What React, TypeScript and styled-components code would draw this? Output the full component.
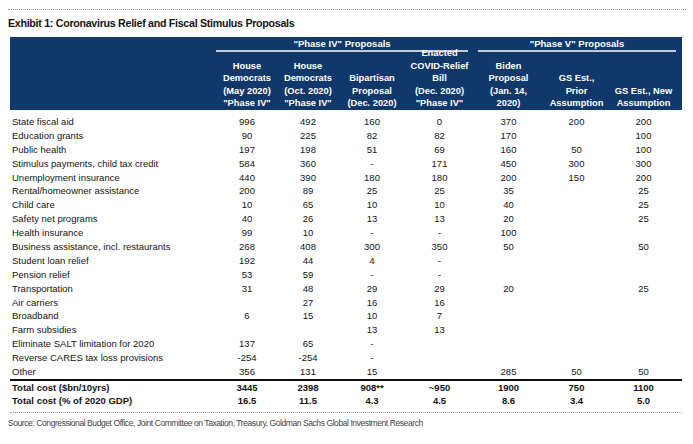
import React from "react";
import styled, { createGlobalStyle } from "styled-components";

const GlobalStyle = createGlobalStyle`
  html, body { margin: 0; padding: 0; background: #ffffff; }
  body { font-family: "Liberation Sans", Arial, sans-serif; }
`;

const COLS = "205px 60px 62px 66px 69px 69px 67px 67px";

const Page = styled.div`
  width: 693px;
  box-sizing: border-box;
  padding: 9px 7px 0 8px;
  font-family: "Liberation Sans", Arial, sans-serif;
  color: #141414;
`;

const TopRule = styled.div`
  width: 678px;
  border-top: 1px dotted #9a9a9a;
`;

const Title = styled.h1`
  margin: 6px 0 0 0;
  font-size: 10.7px;
  line-height: 14px;
  font-weight: 700;
  letter-spacing: -0.3px;
  color: #141414;
`;

const Table = styled.div`
  margin: 7px 0 0 2px;
  width: 672px;
`;

const Header = styled.div`
  display: grid;
  grid-template-columns: ${COLS};
  grid-template-rows: 15px 58px;
  padding: 0 5px 0 2px;
  background: #10386a;
  color: #ffffff;
  font-weight: 700;
`;

const GroupLabel = styled.div<{ $col: string; $ml: number; $mr: number }>`
  grid-row: 1;
  grid-column: ${(p) => p.$col};
  align-self: start;
  margin: 1px ${(p) => p.$mr}px 0 ${(p) => p.$ml}px;
  font-size: 9.5px;
  line-height: 12px;
  text-align: center;
  border-bottom: 2px solid #c6cad3;
`;

const ColHead = styled.div<{ $col: number; $raise?: boolean }>`
  grid-row: 2;
  grid-column: ${(p) => p.$col};
  align-self: end;
  margin-top: ${(p) => (p.$raise ? "-4px" : "0")};
  padding-bottom: 0.5px;
  font-size: 9.3px;
  line-height: 12.4px;
  text-align: center;
  white-space: nowrap;
`;

const Body = styled.div`
  padding-top: 5px;
`;

const Row = styled.div<{ $h: number; $bold?: boolean }>`
  display: grid;
  grid-template-columns: ${COLS};
  padding: 0 5px 0 2px;
  height: ${(p) => p.$h}px;
  line-height: ${(p) => p.$h}px;
  font-size: 9.5px;
  font-weight: ${(p) => (p.$bold ? 700 : 400)};
  white-space: nowrap;
`;

const Label = styled.div`
  text-align: left;
`;

const Cell = styled.div`
  text-align: center;
`;

const Totals = styled.div`
  border-top: 2px solid #111111;
`;

const BottomRule = styled.div`
  margin-top: 5px;
  border-top: 1px dotted #9a9a9a;
`;

const Source = styled.div`
  margin-top: 4px;
  font-size: 8.5px;
  line-height: 12px;
  letter-spacing: -0.42px;
  color: #444444;
  white-space: nowrap;
`;

const heads: { lines: string[]; raise?: boolean }[] = [
  { lines: ["House", "Democrats", "(May 2020)", '"Phase IV"'] },
  { lines: ["House", "Democrats", "(Oct. 2020)", '"Phase IV"'] },
  { lines: ["Bipartisan", "Proposal", "(Dec. 2020)"] },
  { lines: ["Enacted", "COVID-Relief", "Bill", "(Dec. 2020)", '"Phase IV"'], raise: true },
  { lines: ["Biden", "Proposal", "(Jan. 14,", "2020)"] },
  { lines: ["GS Est.,", "Prior", "Assumption"] },
  { lines: ["GS Est., New", "Assumption"] },
];

const rows: string[][] = [
  ["State fiscal aid", "996", "492", "160", "0", "370", "200", "200"],
  ["Education grants", "90", "225", "82", "82", "170", "", "100"],
  ["Public health", "197", "198", "51", "69", "160", "50", "100"],
  ["Stimulus payments, child tax credit", "584", "360", "-", "171", "450", "300", "300"],
  ["Unemployment insurance", "440", "390", "180", "180", "200", "150", "200"],
  ["Rental/homeowner assistance", "200", "89", "25", "25", "35", "", "25"],
  ["Child care", "10", "65", "10", "10", "40", "", "25"],
  ["Safety net programs", "40", "26", "13", "13", "20", "", "25"],
  ["Health insurance", "99", "10", "-", "-", "100", "", ""],
  ["Business assistance, incl. restaurants", "268", "408", "300", "350", "50", "", "50"],
  ["Student loan relief", "192", "44", "4", "-", "", "", ""],
  ["Pension relief", "53", "59", "-", "-", "", "", ""],
  ["Transportation", "31", "48", "29", "29", "20", "", "25"],
  ["Air carriers", "", "27", "16", "16", "", "", ""],
  ["Broadband", "6", "15", "10", "7", "", "", ""],
  ["Farm subsidies", "", "", "13", "13", "", "", ""],
  ["Eliminate SALT limitation for 2020", "137", "65", "-", "", "", "", ""],
  ["Reverse CARES tax loss provisions", "-254", "-254", "-", "", "", "", ""],
  ["Other", "356", "131", "15", "", "285", "50", "50"],
];

const totals: string[][] = [
  ["Total cost ($bn/10yrs)", "3445", "2398", "908**", "~950", "1900", "750", "1100"],
  ["Total cost (% of 2020 GDP)", "16.5", "11.5", "4.3", "4.5", "8.6", "3.4", "5.0"],
];

function DataRow({ r, h, bold }: { r: string[]; h: number; bold?: boolean }) {
  return (
    <Row $h={h} $bold={bold}>
      <Label>{r[0]}</Label>
      {r.slice(1).map((v, i) => (
        <Cell key={i}>{v}</Cell>
      ))}
    </Row>
  );
}

export default function App() {
  return (
    <>
      <GlobalStyle />
      <Page>
        <TopRule />
        <Title>Exhibit 1: Coronavirus Relief and Fiscal Stimulus Proposals</Title>
        <Table>
          <Header>
            <GroupLabel $col="2 / 6" $ml={-1} $mr={6}>
              "Phase IV" Proposals
            </GroupLabel>
            <GroupLabel $col="6 / 9" $ml={4} $mr={1}>
              "Phase V" Proposals
            </GroupLabel>
            {heads.map((h, i) => (
              <ColHead key={i} $col={i + 2} $raise={h.raise}>
                {h.lines.map((l, j) => (
                  <div key={j}>{l}</div>
                ))}
              </ColHead>
            ))}
          </Header>
          <Body>
            {rows.map((r, i) => (
              <DataRow key={i} r={r} h={13.9} />
            ))}
          </Body>
          <Totals>
            {totals.map((r, i) => (
              <DataRow key={i} r={r} h={13} bold />
            ))}
          </Totals>
          <BottomRule />
        </Table>
        <Source>
          Source: Congressional Budget Office, Joint Committee on Taxation, Treasury, Goldman Sachs Global Investment Research
        </Source>
      </Page>
    </>
  );
}
